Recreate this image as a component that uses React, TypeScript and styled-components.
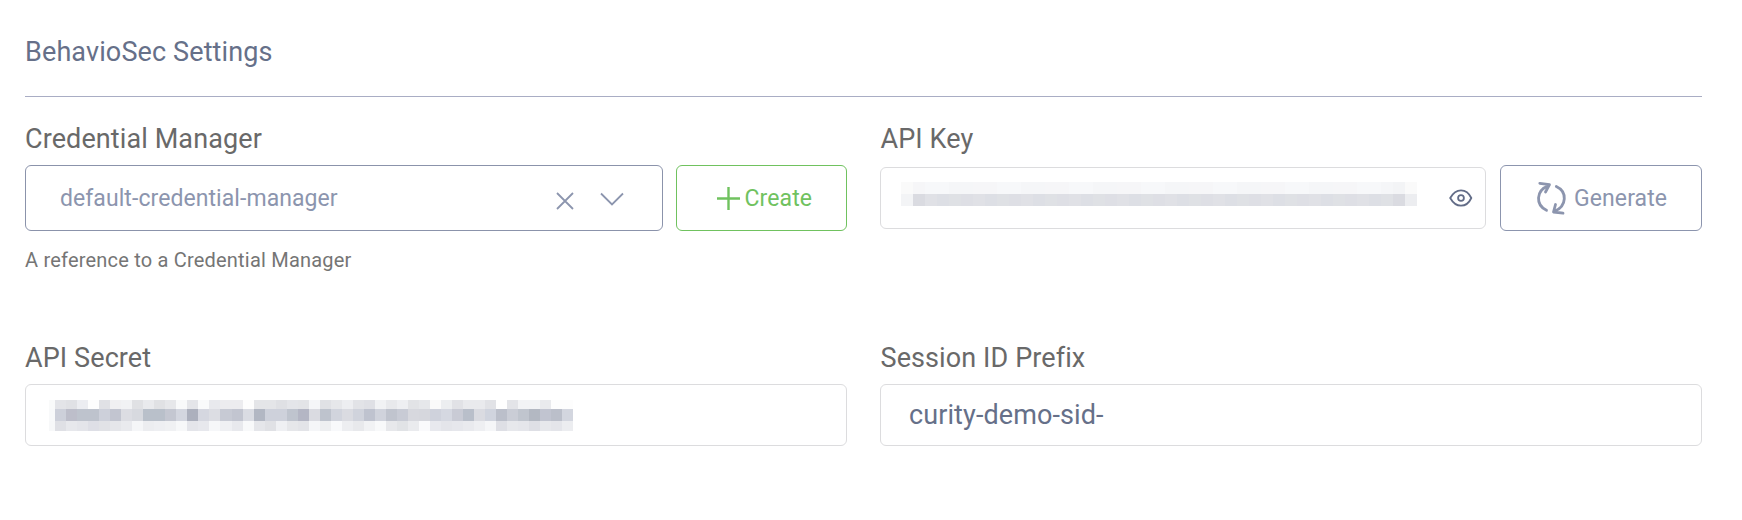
import React from "react";
import styled, { createGlobalStyle } from "styled-components";

const GlobalStyle = createGlobalStyle`
  * { box-sizing: border-box; }
  body { margin: 0; background: #fff; font-family: Roboto, "Liberation Sans", sans-serif; }
`;

const Page = styled.main`
  width: 1742px;
  height: 520px;
  padding: 0 40px 0 25px;
`;

const Title = styled.h2`
  margin: 0;
  height: 97px;
  padding-top: 35px;
  border-bottom: 1px solid #a9adc4;
  font-size: 27px;
  line-height: 34px;
  font-weight: 400;
  letter-spacing: 0.12px;
  color: #667089;
`;

const Grid = styled.div`
  display: grid;
  grid-template-columns: 822px 822px;
  column-gap: 33px;
  grid-template-rows: 219px auto;
  padding-top: 25px;
`;

const Field = styled.div`
  display: flex;
  flex-direction: column;
`;

const Label = styled.label<{ $indent?: number }>`
  height: 43px;
  padding-left: ${(p) => p.$indent ?? 0}px;
  font-size: 27px;
  line-height: 34px;
  letter-spacing: 0.1px;
  color: #696969;
  white-space: nowrap;
`;

const Controls = styled.div<{ $gap: number }>`
  display: flex;
  align-items: center;
  height: 66px;
  gap: ${(p) => p.$gap}px;
`;

const Select = styled.div`
  flex: 1;
  height: 66px;
  display: flex;
  align-items: center;
  padding: 2px 37px 0 34px;
  border: 1px solid #8b93ab;
  border-radius: 6px;
  color: #8c95ae;
`;

const SelectValue = styled.span`
  flex: 1;
  font-size: 23px;
  line-height: 30px;
  letter-spacing: 0.07px;
`;

const Button = styled.button<{ $tone: string; $width: number; $gap: number; $left: number }>`
  width: ${(p) => p.$width}px;
  height: 66px;
  display: flex;
  align-items: center;
  gap: ${(p) => p.$gap}px;
  padding: 0 0 0 ${(p) => p.$left}px;
  background: #fff;
  border: 1px solid currentColor;
  border-radius: 6px;
  color: ${(p) => p.$tone};
  font: 400 23px/30px Roboto, "Liberation Sans", sans-serif;
`;

const ButtonText = styled.span`
  padding-top: 2px;
  letter-spacing: 0.1px;
`;

const Input = styled.div<{ $left: number }>`
  display: flex;
  align-items: center;
  height: 62px;
  padding-left: ${(p) => p.$left}px;
  border: 1px solid #dcdcde;
  border-radius: 6px;
  font-size: 27px;
  letter-spacing: 0.09px;
  color: #667089;
`;

const KeyInput = styled(Input)`
  flex: 1;
  justify-content: space-between;
  padding-right: 12px;
`;

const Hint = styled.p`
  margin: 15px 0 0;
  font-size: 20px;
  line-height: 28px;
  letter-spacing: 0.2px;
  color: #757575;
`;

const Mosaic = styled.div<{ $cols: string; $rows: string; $below?: number }>`
  display: grid;
  grid-template-columns: ${(p) => p.$cols};
  grid-template-rows: ${(p) => p.$rows};
  margin-bottom: ${(p) => p.$below ?? 0}px;
`;

const Cell = styled.i<{ $c: string }>`
  background: ${(p) => p.$c};
`;

const secretRows = [
  "f9fafa e3e4e8 e0e1e5 ecedf1 fdfdfd e0e1e5 f0f0f2 f1f2f4 e0e1e4 e9eaed e0e1e4 e6e7ea f8f9fa e4e5e9 f9fafb e8e9ed ececef ececef fdfdfd e4e5e8 e4e5e8 dfe0e4 e4e5e9 e3e4e7 f5f6f8 e0e1e5 e6e7ea edeef1 e2e3e7 dfe0e5 f1f2f4 e8e9ec eeeff2 e2e3e6 e6e7ea fafafa eceef0 e1e2e6 e9eaed e9eaed e1e2e6 fefefe e3e4e8 f2f3f5 f2f3f5 e9eaed fdfdfd fdfdfd",
  "f8f9fa cdd0da bdbeca bec3cd bec3cd cdd0da c2c5d0 dcdde3 d7d9df b9c0ca b9c0ca c4c7d1 d3d6df acb0bd d5d7e0 dcdde3 c7cad4 c2c5d0 dadce3 b2b7c3 ced1db ced1db bfc4ce b4b6c4 dadbe1 bec3cd d1d4dd dadbe1 d0d3dc bfc3cf d0d3dc c0c4ce c8cbd5 d7d8de d6d7dd cfd2dc d5d8e1 c9cbd5 b9bfca dadbe1 d0d4de bbbfca cacdd6 c0c5ce b3b8c2 c1c4d0 bbbfca d3d6df",
  "f7f8f9 dfe0e5 e7e8ec e4e5ea dedfe6 e1e2e6 e5e6ea e9eaee f5f6f8 ecedf0 eeeff2 f0f1f3 f7f8f9 e4e5ea e7e8ed f6f7f9 eff0f3 e8e9ed f8f9fa e5e6ea e0e1e5 eff0f3 e6e7ea e3e4e8 f5f6f8 eeeff1 f8f9fb edeef1 e8e9ec f1f2f4 f8f9fa e7e8eb e1e3e6 eaebee fafafc e8e9ee e4e5ea e6e7ec e9eaee eeeff2 f5f6f8 dedfe5 e7e8ec e5e6eb dedfe5 e7e8ec e4e5ea ecedf0",
].map((r) => r.split(" ").map((c) => "#" + c));

const keyRows = [0, 1].map((row) =>
  Array.from({ length: 43 }, (_, i) => {
    if (row === 0) {
      if (i === 0 || i === 42) return "#fafafa";
      return i === 41 ? "#f3f4f6" : ["#f6f6f8", "#f7f8fa", "#f5f6f8"][(i >> 1) % 3];
    }
    if (i === 0) return "#f3f4f6";
    if (i === 42) return "#ecedf0";
    if (i === 1 || i === 41) return "#dadbe1";
    return ["#dfe1e5", "#dedfe5", "#e0e1e6", "#dddfe5"][i % 4];
  })
);

const SecretMask = () => (
  <Mosaic $cols="6px repeat(47, 11.04px)" $rows="9px 12px 10px">
    {secretRows.flatMap((r, y) => r.map((c, x) => <Cell key={`${y}-${x}`} $c={c} />))}
  </Mosaic>
);

const KeyMask = () => (
  <Mosaic $cols="repeat(43, 12px)" $rows="12px 12px" $below={8}>
    {keyRows.flatMap((r, y) => r.map((c, x) => <Cell key={`${y}-${x}`} $c={c} />))}
  </Mosaic>
);

const SelectIcons = () => (
  <svg width="70" height="24" viewBox="0 0 70 24" fill="none" stroke="currentColor" strokeWidth="1.8">
    <path d="M2 6 18 22M18 6 2 22" />
    <path d="M46 6.500 57 17.500 68 6.500" />
  </svg>
);

const PlusIcon = () => (
  <svg width="23" height="23" viewBox="0 0 23 23" fill="none" stroke="currentColor" strokeWidth="2.4">
    <path d="M11.500 0v23M0 11.500h23" />
  </svg>
);

const EyeIcon = () => (
  <svg width="24" height="20" viewBox="0 0 24 20" fill="none" stroke="#626c87" strokeWidth="1.8">
    <path d="M1.200 10C4 5 7.500 2.300 12 2.300S20 5 22.300 10C20 15 16.500 17.700 12 17.700S4 15 1.200 10Z" />
    <circle cx="12" cy="10" r="2.900" />
  </svg>
);

const CycleIcon = () => (
  <svg width="32" height="34" viewBox="0 0 32 34" fill="none" stroke="currentColor" strokeWidth="2.8" strokeLinecap="round" strokeLinejoin="round">
    <path d="M10.500 29.300C-.5 24 -.5 9.500 12.800 4.500M3.800 2.300 13.500 3.700 9.500 11" />
    <path d="M20.300 5.500C31.300 10.500 31.300 25 18.200 30.500M27 32.200 17.500 31 19.500 23.500" />
  </svg>
);

export default function App() {
  return (
    <>
      <GlobalStyle />
      <Page>
        <Title>BehavioSec Settings</Title>
        <Grid>
          <Field>
            <Label>Credential Manager</Label>
            <Controls $gap={13}>
              <Select>
                <SelectValue>default-credential-manager</SelectValue>
                <SelectIcons />
              </Select>
              <Button $tone="#70c25f" $width={171} $gap={5} $left={39.5}>
                <PlusIcon />
                <ButtonText>Create</ButtonText>
              </Button>
            </Controls>
            <Hint>A reference to a Credential Manager</Hint>
          </Field>
          <Field>
            <Label $indent={0.5}>API Key</Label>
            <Controls $gap={14}>
              <KeyInput $left={20}>
                <KeyMask />
                <EyeIcon />
              </KeyInput>
              <Button $tone="#8c95ae" $width={202} $gap={6} $left={35}>
                <CycleIcon />
                <ButtonText>Generate</ButtonText>
              </Button>
            </Controls>
          </Field>
          <Field>
            <Label>API Secret</Label>
            <Input $left={23}>
              <SecretMask />
            </Input>
          </Field>
          <Field>
            <Label $indent={0.5}>Session ID Prefix</Label>
            <Input $left={28}>curity-demo-sid-</Input>
          </Field>
        </Grid>
      </Page>
    </>
  );
}
